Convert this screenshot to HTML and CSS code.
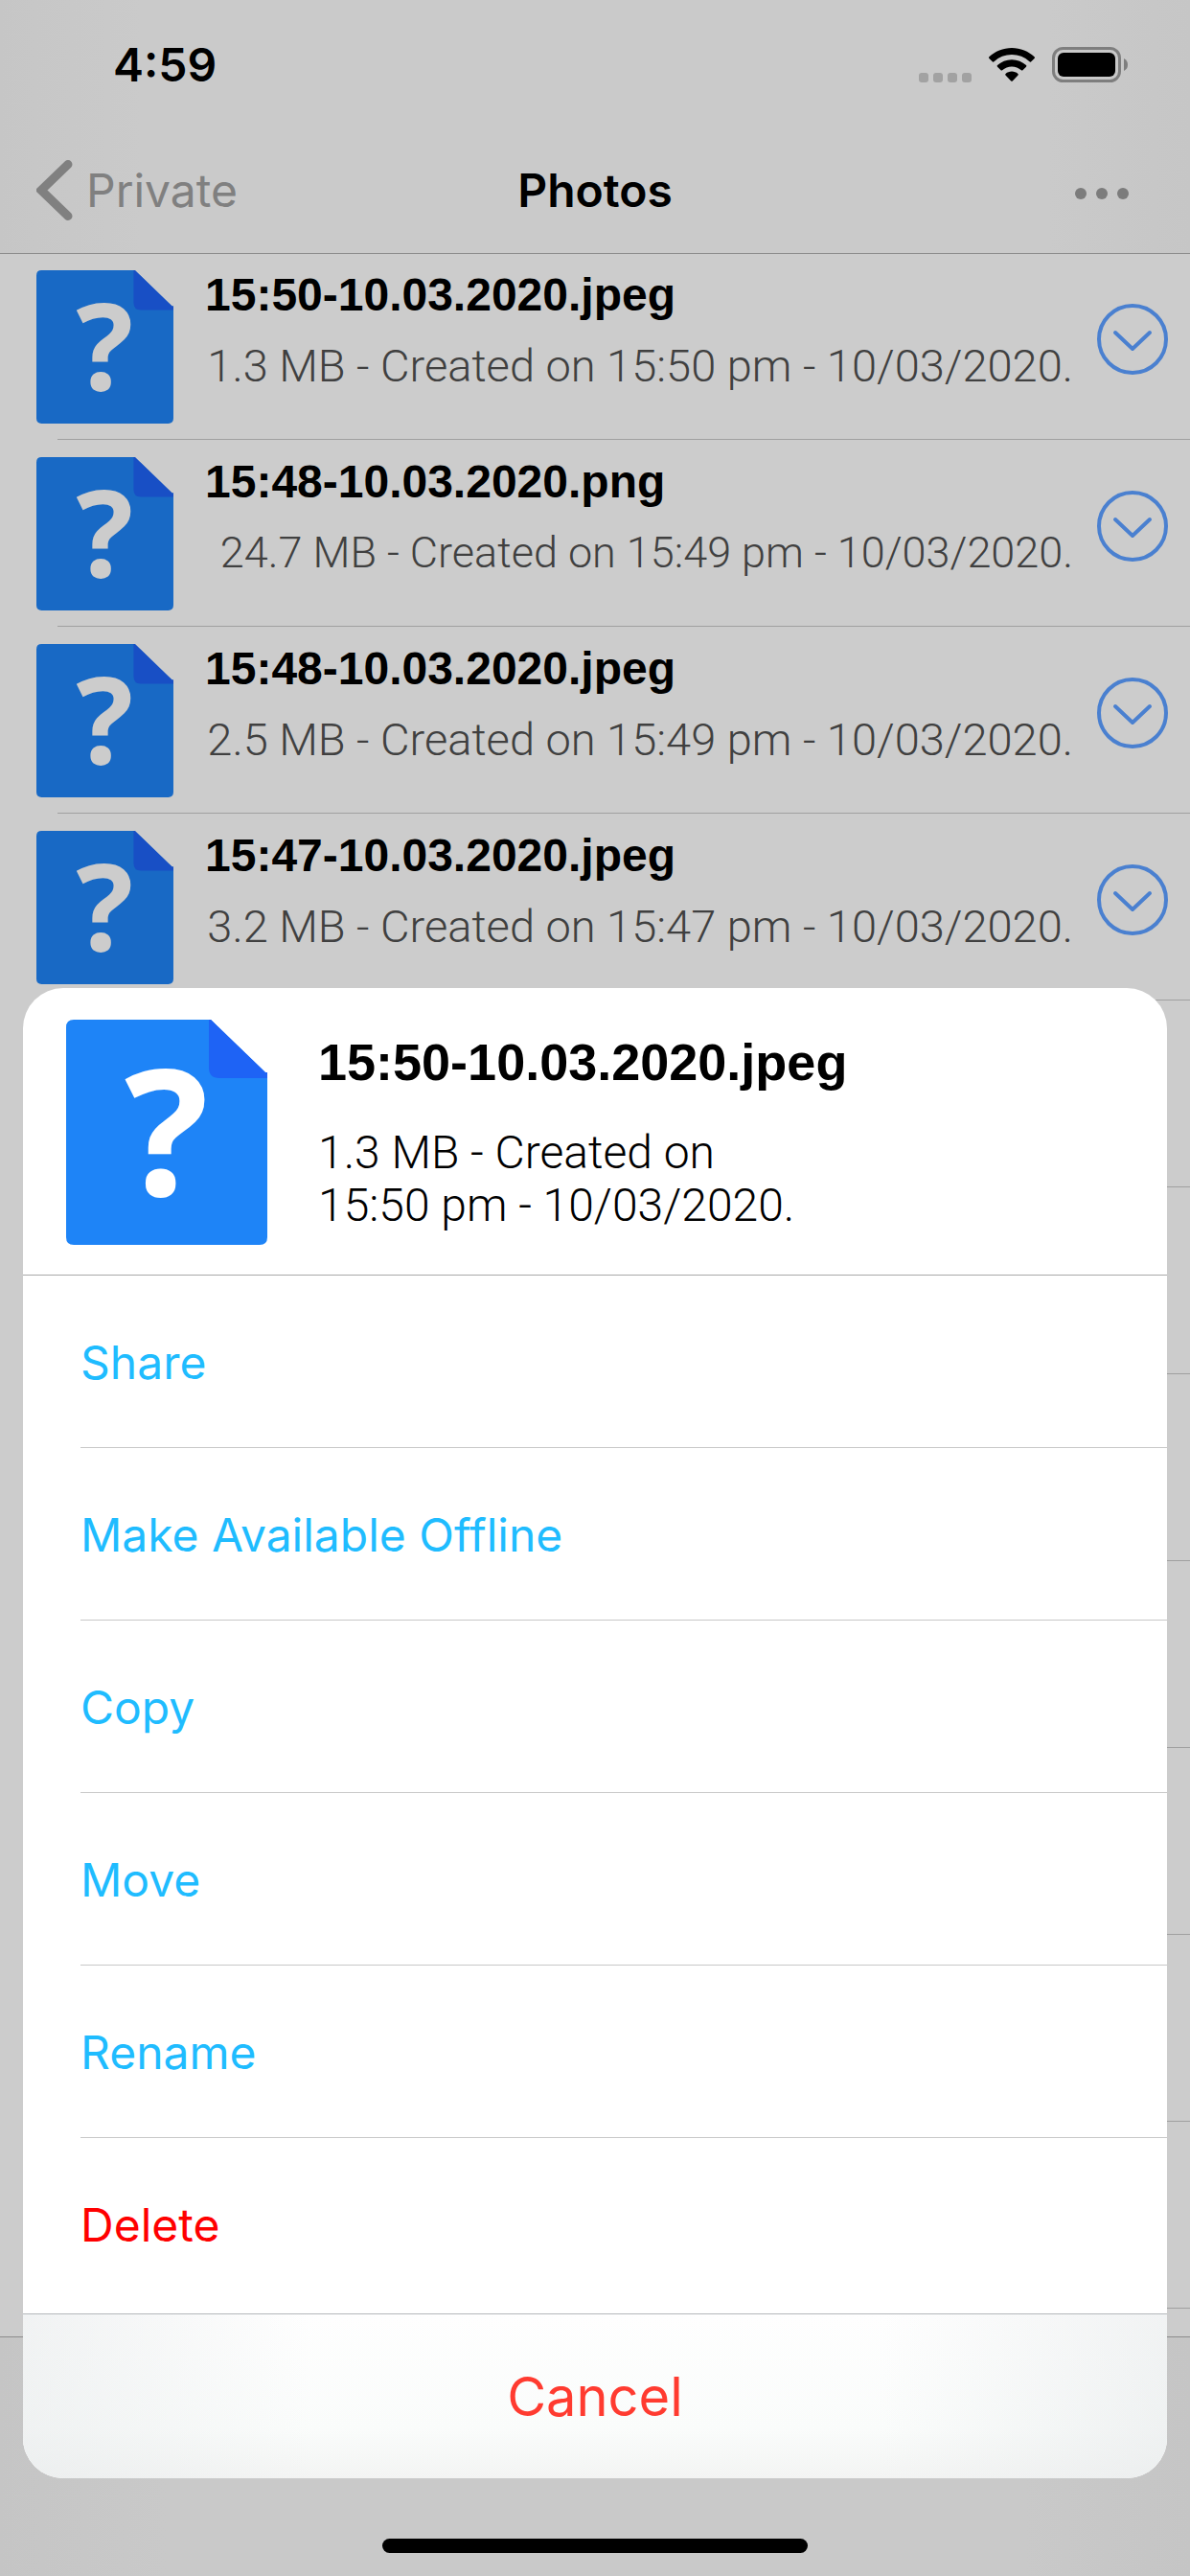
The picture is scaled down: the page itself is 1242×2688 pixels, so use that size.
FILE: index.html
```html
<!DOCTYPE html>
<html lang="en">
<head>
  <meta charset="UTF-8">
  <meta name="viewport" content="width=device-width, initial-scale=1">
  <title>Photos</title>
  <link rel="stylesheet" href="styles.css">
</head>
<body>
  <div class="app">
    <header class="top">
      <div class="status-bar">
        <span class="time">4:59</span>
        <div class="status-icons">
          <svg width="55" height="10" viewBox="0 0 55 10" class="signal" aria-hidden="true">
            <rect x="0" width="10" height="10" rx="3"/>
            <rect x="15" width="10" height="10" rx="3"/>
            <rect x="30" width="10" height="10" rx="3"/>
            <rect x="45" width="10" height="10" rx="3"/>
          </svg>
          <svg width="48" height="36" viewBox="0 0 48 36" class="wifi" aria-hidden="true">
            <path d="M24 0C33 0 41.500 3.500 47.600 9.300Q48.400 10.100 47.600 10.900L44 14.400Q43.300 15 42.500 14.300A27 27 0 0 0 5.500 14.300Q4.700 15 4 14.400L.4 10.900Q-.4 10.100 .4 9.300C6.500 3.500 15 0 24 0Z"/>
            <path d="M24 12.300C29.700 12.300 35 14.500 39 18.100Q39.800 18.900 39 19.700L35.400 23.200Q34.700 23.800 33.900 23.200A14.800 14.800 0 0 0 14.100 23.200Q13.300 23.800 12.600 23.200L9 19.700Q8.200 18.900 9 18.100C13 14.500 18.300 12.300 24 12.300Z"/>
            <path d="M24 24.600C26.400 24.600 28.700 25.500 30.400 26.900Q31.300 27.700 30.500 28.500L24.800 34.400Q24 35.200 23.200 34.400L17.500 28.500Q16.700 27.700 17.600 26.900C19.300 25.500 21.600 24.600 24 24.600Z"/>
          </svg>
          <svg width="80" height="37" viewBox="0 0 80 37" class="battery" aria-hidden="true">
            <rect x="1.500" y="1.500" width="69" height="34" rx="10" fill="none" stroke="#7e7e7e" stroke-width="3"/>
            <rect x="6" y="6" width="60" height="25" rx="6"/>
            <path d="M75 12Q79 14 79 18.500Q79 23 75 25Z" fill="#7e7e7e"/>
          </svg>
        </div>
      </div>
      <nav class="nav-bar">
        <a class="back" href="#">
          <svg width="38" height="63" viewBox="0 0 38 63" aria-hidden="true">
            <path d="M33 4.500L5 31.500L33 58.500" fill="none" stroke="currentColor" stroke-width="9" stroke-linecap="round" stroke-linejoin="miter"/>
          </svg>
          Private
        </a>
        <h1 class="title">Photos</h1>
        <button class="menu" type="button" aria-label="More">
          <svg width="56" height="12" viewBox="0 0 56 12" aria-hidden="true">
            <circle cx="6" cy="6" r="6"/>
            <circle cx="28" cy="6" r="6"/>
            <circle cx="50" cy="6" r="6"/>
          </svg>
        </button>
      </nav>
    </header>

    <ul class="files">
      <li class="file">
        <svg class="file-icon" viewBox="0 0 210 235" aria-hidden="true">
          <path class="file-page" d="M8 0H151L208 55H210V227Q210 235 202 235H8Q0 235 0 227V8Q0 0 8 0Z"/>
          <path class="file-fold" d="M149 0H151L208 55H210V61H160Q149 61 149 50Z"/>
          <text class="file-mark" x="105" y="184" text-anchor="middle">?</text>
        </svg>
        <div class="file-text">
          <div class="file-name">15:50-10.03.2020.jpeg</div>
          <div class="file-info">1.3 MB - Created on 15:50 pm - 10/03/2020.</div>
        </div>
        <button class="expand" type="button" aria-label="Actions">
          <svg viewBox="0 0 76 76" aria-hidden="true">
            <circle cx="38" cy="38" r="35"/>
            <path d="M20 31L38 48L56 31"/>
          </svg>
        </button>
      </li>
      <li class="file">
        <svg class="file-icon" viewBox="0 0 210 235" aria-hidden="true">
          <path class="file-page" d="M8 0H151L208 55H210V227Q210 235 202 235H8Q0 235 0 227V8Q0 0 8 0Z"/>
          <path class="file-fold" d="M149 0H151L208 55H210V61H160Q149 61 149 50Z"/>
          <text class="file-mark" x="105" y="184" text-anchor="middle">?</text>
        </svg>
        <div class="file-text">
          <div class="file-name">15:48-10.03.2020.png</div>
          <div class="file-info long">24.7 MB - Created on 15:49 pm - 10/03/2020.</div>
        </div>
        <button class="expand" type="button" aria-label="Actions">
          <svg viewBox="0 0 76 76" aria-hidden="true">
            <circle cx="38" cy="38" r="35"/>
            <path d="M20 31L38 48L56 31"/>
          </svg>
        </button>
      </li>
      <li class="file">
        <svg class="file-icon" viewBox="0 0 210 235" aria-hidden="true">
          <path class="file-page" d="M8 0H151L208 55H210V227Q210 235 202 235H8Q0 235 0 227V8Q0 0 8 0Z"/>
          <path class="file-fold" d="M149 0H151L208 55H210V61H160Q149 61 149 50Z"/>
          <text class="file-mark" x="105" y="184" text-anchor="middle">?</text>
        </svg>
        <div class="file-text">
          <div class="file-name">15:48-10.03.2020.jpeg</div>
          <div class="file-info">2.5 MB - Created on 15:49 pm - 10/03/2020.</div>
        </div>
        <button class="expand" type="button" aria-label="Actions">
          <svg viewBox="0 0 76 76" aria-hidden="true">
            <circle cx="38" cy="38" r="35"/>
            <path d="M20 31L38 48L56 31"/>
          </svg>
        </button>
      </li>
      <li class="file">
        <svg class="file-icon" viewBox="0 0 210 235" aria-hidden="true">
          <path class="file-page" d="M8 0H151L208 55H210V227Q210 235 202 235H8Q0 235 0 227V8Q0 0 8 0Z"/>
          <path class="file-fold" d="M149 0H151L208 55H210V61H160Q149 61 149 50Z"/>
          <text class="file-mark" x="105" y="184" text-anchor="middle">?</text>
        </svg>
        <div class="file-text">
          <div class="file-name">15:47-10.03.2020.jpeg</div>
          <div class="file-info">3.2 MB - Created on 15:47 pm - 10/03/2020.</div>
        </div>
        <button class="expand" type="button" aria-label="Actions">
          <svg viewBox="0 0 76 76" aria-hidden="true">
            <circle cx="38" cy="38" r="35"/>
            <path d="M20 31L38 48L56 31"/>
          </svg>
        </button>
      </li>
      <li class="file"></li>
      <li class="file"></li>
      <li class="file"></li>
      <li class="file"></li>
      <li class="file"></li>
      <li class="file"></li>
      <li class="file"></li>
    </ul>

    <footer class="toolbar">
      <div class="home-indicator"></div>
    </footer>
  </div>

  <section class="sheet" role="dialog" aria-label="File actions">
    <div class="sheet-header">
      <svg class="sheet-icon" viewBox="0 0 210 235" aria-hidden="true">
        <path class="file-page" d="M8 0H151L208 55H210V227Q210 235 202 235H8Q0 235 0 227V8Q0 0 8 0Z"/>
        <path class="file-fold" d="M149 0H151L208 55H210V61H160Q149 61 149 50Z"/>
        <text class="file-mark" x="105" y="184" text-anchor="middle">?</text>
      </svg>
      <div class="sheet-text">
        <h2 class="sheet-name">15:50-10.03.2020.jpeg</h2>
        <p class="sheet-info">1.3 MB - Created on<br>15:50 pm - 10/03/2020.</p>
      </div>
    </div>
    <div class="actions">
      <button class="action" type="button">Share</button>
      <button class="action" type="button">Make Available Offline</button>
      <button class="action" type="button">Copy</button>
      <button class="action" type="button">Move</button>
      <button class="action" type="button">Rename</button>
      <button class="action delete" type="button">Delete</button>
    </div>
    <button class="cancel" type="button">Cancel</button>
  </section>
</body>
</html>
```
FILE: styles.css
```css
* {
  box-sizing: border-box;
}

body {
  margin: 0;
  background-color: #ccc;
  font-family: Inter, "Liberation Sans", sans-serif;
  color: #000;
}

button {
  padding: 0;
  border: none;
  background: none;
  font-family: inherit;
  cursor: pointer;
}

svg {
  display: block;
}

h1, h2, p, ul {
  margin: 0;
  padding: 0;
}

.app {
  display: flex;
  flex-direction: column;
  height: 100vh;
  overflow: hidden;
}

/* header */
.top {
  flex: none;
  background: linear-gradient(90deg, #c6c6c6, #cacaca 12%, #cacaca 88%, #c6c6c6);
  border-bottom: 1px solid #8c8c8c;
}

.status-bar {
  display: flex;
  justify-content: space-between;
  align-items: center;
  height: 134px;
  padding: 0 64px 0 118px;
}

.time {
  font-size: 48px;
  font-weight: 600;
}

.status-icons {
  display: flex;
  align-items: flex-end;
  gap: 18px;
}

.signal {
  fill: #a2a2a2;
}

.nav-bar {
  display: grid;
  grid-template-columns: 1fr auto 1fr;
  align-items: center;
  height: 130px;
  padding: 0 38px 2px;
}

.back {
  display: flex;
  align-items: center;
  gap: 14px;
  font-size: 48px;
  color: #808080;
  text-decoration: none;
}

.title {
  font-size: 48px;
  font-weight: 600;
}

.menu {
  justify-self: end;
  padding: 8px 26px 0 0;
  fill: #7c7c7c;
}

/* file icon */
.file-page {
  fill: var(--page);
}

.file-fold {
  fill: var(--fold);
}

.file-mark {
  fill: var(--mark);
  font-family: "Open Sans", sans-serif;
  font-size: 184px;
  font-weight: 700;
}

/* file list */
.files {
  flex: 1;
  overflow: hidden;
  list-style: none;
  --page: #1869c5;
  --fold: #184fc5;
  --mark: #ccc;
}

.file {
  display: flex;
  align-items: flex-start;
  height: 195px;
  padding: 17px 22px 0 38px;
  background: linear-gradient(#a0a0a0, #a0a0a0) 60px 193px / 100% 1px no-repeat;
}

.file-icon {
  flex: none;
  width: 143px;
  height: 160px;
}

.file-text {
  flex: 1;
  min-width: 0;
  padding-left: 33px;
  white-space: nowrap;
}

.file-name {
  font: bold 48px/52px "Liberation Sans", sans-serif;
}

.file-info {
  margin: 20px 24px 0 0;
  font: 300 47px/56px Roboto, sans-serif;
  text-align: right;
  color: #404040;
}

/* longer lines step down to stay clear of the button */
.file-info.long {
  font-size: 45px;
}

.expand {
  flex: none;
  margin-top: 34px;
}

.expand svg {
  width: 76px;
  height: 76px;
  fill: none;
  stroke: #4a80d0;
  stroke-width: 4;
  stroke-linecap: round;
  stroke-linejoin: round;
}

/* bottom bar */
.toolbar {
  flex: none;
  display: flex;
  justify-content: center;
  align-items: flex-end;
  height: 250px;
  padding-bottom: 24px;
  background: linear-gradient(90deg, #c5c5c5, #c9c9c9 14%, #c9c9c9 86%, #c5c5c5);
  border-top: 1px solid #8c8c8c;
}

.home-indicator {
  width: 444px;
  height: 15px;
  border-radius: 8px;
  background-color: #000;
}

/* action sheet */
.sheet {
  position: fixed;
  left: 24px;
  right: 24px;
  bottom: 102px;
  border-radius: 42px;
  background-color: #fff;
  overflow: hidden;
  --page: #1e84f7;
  --fold: #1e63f5;
  --mark: #fff;
}

.sheet-header {
  display: flex;
  height: 300px;
  padding: 33px 45px 0;
  border-bottom: 1px solid #a8a8a8;
}

.sheet-icon {
  flex: none;
  width: 210px;
  height: 235px;
}

.sheet-text {
  padding: 14px 0 0 53px;
}

.sheet-name {
  font: bold 54px/60px "Liberation Sans", sans-serif;
}

.sheet-info {
  margin-top: 37px;
  font: 300 48px/55px Roboto, sans-serif;
}

.actions {
  padding-bottom: 3px;
  border-bottom: 1px solid #b4b8ba;
}

.action {
  display: block;
  width: 100%;
  height: 180px;
  padding-left: 60px;
  font-size: 48px;
  text-align: left;
  color: #1fbcff;
  background: linear-gradient(#c8c8c8, #c8c8c8) 60px 100% / 100% 1px no-repeat;
}

.action.delete {
  color: #f00;
  background: none;
}

.cancel {
  display: block;
  width: 100%;
  height: 171px;
  font-size: 56px;
  color: #ff3b30;
  background:
    linear-gradient(90deg, rgba(232, 235, 236, 0.6), transparent 25%, transparent 75%, rgba(232, 235, 236, 0.6)),
    linear-gradient(#fefefe, #fafcfb 70%, #f3f4f3);
}
```
